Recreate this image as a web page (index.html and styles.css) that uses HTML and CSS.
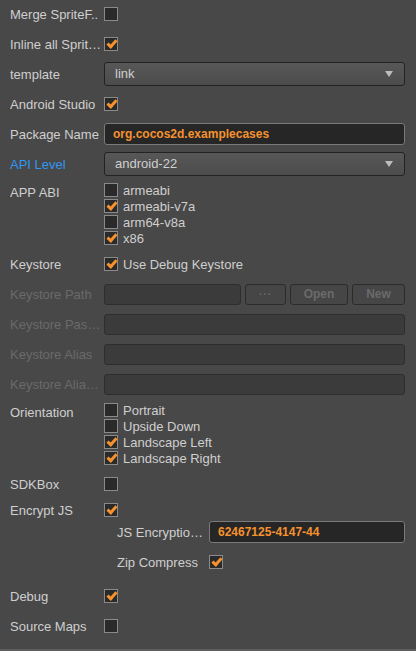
FILE: index.html
```html
<!DOCTYPE html>
<html>
<head>
  <meta charset="UTF-8">
  <title>Build Settings</title>
  <link rel="stylesheet" href="styles.css">
</head>
<body>
  <div class="panel">
    <div class="prop">
      <div class="prop-label">Merge SpriteF..</div>
      <div class="prop-field"><span class="check"></span></div>
    </div>
    <div class="prop">
      <div class="prop-label">Inline all Sprit…</div>
      <div class="prop-field"><span class="check on"></span></div>
    </div>
    <div class="prop">
      <div class="prop-label">template</div>
      <div class="prop-field"><div class="select">link</div></div>
    </div>
    <div class="prop">
      <div class="prop-label">Android Studio</div>
      <div class="prop-field"><span class="check on"></span></div>
    </div>
    <div class="prop">
      <div class="prop-label">Package Name</div>
      <div class="prop-field"><div class="input">org.cocos2d.examplecases</div></div>
    </div>
    <div class="prop">
      <div class="prop-label highlight">API Level</div>
      <div class="prop-field"><div class="select">android-22</div></div>
    </div>
    <div class="prop multi">
      <div class="prop-label">APP ABI</div>
      <div class="prop-field list">
        <label class="item"><span class="check"></span>armeabi</label>
        <label class="item"><span class="check on"></span>armeabi-v7a</label>
        <label class="item"><span class="check"></span>arm64-v8a</label>
        <label class="item"><span class="check on"></span>x86</label>
      </div>
    </div>
    <div class="prop">
      <div class="prop-label">Keystore</div>
      <div class="prop-field"><label class="item"><span class="check on"></span>Use Debug Keystore</label></div>
    </div>
    <div class="prop">
      <div class="prop-label disabled">Keystore Path</div>
      <div class="prop-field">
        <div class="input off grow"></div>
        <button class="btn dots">···</button>
        <button class="btn open">Open</button>
        <button class="btn new">New</button>
      </div>
    </div>
    <div class="prop">
      <div class="prop-label disabled">Keystore Pas…</div>
      <div class="prop-field"><div class="input off"></div></div>
    </div>
    <div class="prop">
      <div class="prop-label disabled">Keystore Alias</div>
      <div class="prop-field"><div class="input off"></div></div>
    </div>
    <div class="prop">
      <div class="prop-label disabled">Keystore Alia…</div>
      <div class="prop-field"><div class="input off"></div></div>
    </div>
    <div class="prop multi">
      <div class="prop-label">Orientation</div>
      <div class="prop-field list">
        <label class="item"><span class="check"></span>Portrait</label>
        <label class="item"><span class="check"></span>Upside Down</label>
        <label class="item"><span class="check on"></span>Landscape Left</label>
        <label class="item"><span class="check on"></span>Landscape Right</label>
      </div>
    </div>
    <div class="prop">
      <div class="prop-label">SDKBox</div>
      <div class="prop-field"><span class="check"></span></div>
    </div>
    <div class="group">
      <div class="prop short">
        <div class="prop-label">Encrypt JS</div>
        <div class="prop-field"><span class="check on"></span></div>
      </div>
      <div class="prop sub">
        <div class="prop-label">JS Encryptio…</div>
        <div class="prop-field"><div class="input">62467125-4147-44</div></div>
      </div>
      <div class="prop sub">
        <div class="prop-label">Zip Compress</div>
        <div class="prop-field"><span class="check on"></span></div>
      </div>
    </div>
    <div class="prop">
      <div class="prop-label">Debug</div>
      <div class="prop-field"><span class="check on"></span></div>
    </div>
    <div class="prop">
      <div class="prop-label">Source Maps</div>
      <div class="prop-field"><span class="check"></span></div>
    </div>
  </div>
  <div class="bottom-line"></div>
</body>
</html>
```

FILE: styles.css
```css
:root {
  --bg: #484848;
  --text: #cfcfcf;
  --muted: #6a6a6a;
  --orange: #f5922f;
  --blue: #2f97f0;
}

html, body {
  margin: 0;
  padding: 0;
}

body {
  width: 416px;
  height: 651px;
  background-color: var(--bg);
  color: var(--text);
  font-family: 'Liberation Sans', Arial, Helvetica, sans-serif;
  font-size: 13px;
  display: flex;
  flex-direction: column;
  overflow: hidden;
}

.panel {
  padding: 2px 11px 0 10px;
  flex: 1;
}

.prop {
  display: flex;
  align-items: center;
  height: 24px;
  margin-bottom: 6px;
}

.prop.multi {
  height: auto;
  align-items: flex-start;
}

.prop.multi .prop-label {
  line-height: 21px;
}

.prop-label {
  width: 91px;
  margin-right: 3px;
  flex-shrink: 0;
  white-space: nowrap;
  overflow: hidden;
}

.prop-label.highlight {
  color: var(--blue);
}

.prop-label.disabled {
  color: var(--muted);
}

.prop-field {
  flex: 1;
  display: flex;
  align-items: center;
  gap: 4px;
  min-width: 0;
}

.list {
  flex-direction: column;
  align-items: stretch;
  gap: 0;
}

.item {
  display: flex;
  align-items: center;
  height: 16px;
  gap: 5px;
}

/* checkbox */
.check {
  width: 12px;
  height: 12px;
  border: 1px solid #8a8a8a;
  background-color: #2a2a2a;
  flex-shrink: 0;
  position: relative;
}

.check.on::after {
  content: "";
  position: absolute;
  left: 4px;
  top: 0;
  width: 3px;
  height: 7px;
  border: solid var(--orange);
  border-width: 0 3px 3px 0;
  transform: rotate(42deg);
}

/* select box */
.select {
  flex: 1;
  height: 22px;
  line-height: 22px;
  padding: 0 10px;
  border: 1px solid #222;
  border-radius: 3px;
  background: linear-gradient(#575757, #4c4c4c);
  position: relative;
}

.select::after {
  content: "";
  position: absolute;
  right: 11px;
  top: 8px;
  border-left: 4px solid transparent;
  border-right: 4px solid transparent;
  border-top: 6px solid #bdbdbd;
}

/* text input */
.input {
  flex: 1;
  height: 20px;
  line-height: 20px;
  padding: 0 8px;
  border: 1px solid #7a7a7a;
  border-radius: 3px;
  background-color: #262626;
  color: var(--orange);
  font-weight: bold;
  font-size: 12px;
  white-space: nowrap;
  overflow: hidden;
}

.input.off {
  background-color: #3b3b3b;
  border-color: #2e2e2e;
  height: 19px;
}

.btn {
  height: 21px;
  padding: 0;
  border: 1px solid #2b2b2b;
  border-radius: 3px;
  background-color: #464646;
  color: var(--muted);
  font-family: inherit;
  font-size: 12px;
  font-weight: bold;
}

.btn.dots {
  width: 41px;
  font-size: 10px;
  letter-spacing: 1px;
}

.btn.open {
  width: 58px;
}

.btn.new {
  width: 53px;
}

/* encrypt group */
.group {
  margin-bottom: 10px;
}

.prop.short {
  height: 16px;
  margin-bottom: 2px;
}

.prop.sub {
  padding-left: 107px;
}

.prop.sub .prop-label {
  width: 89px;
}

.prop.sub:last-child {
  margin-bottom: 0;
}

.bottom-line {
  height: 2px;
  background-color: #5e5e5e;
}
```
